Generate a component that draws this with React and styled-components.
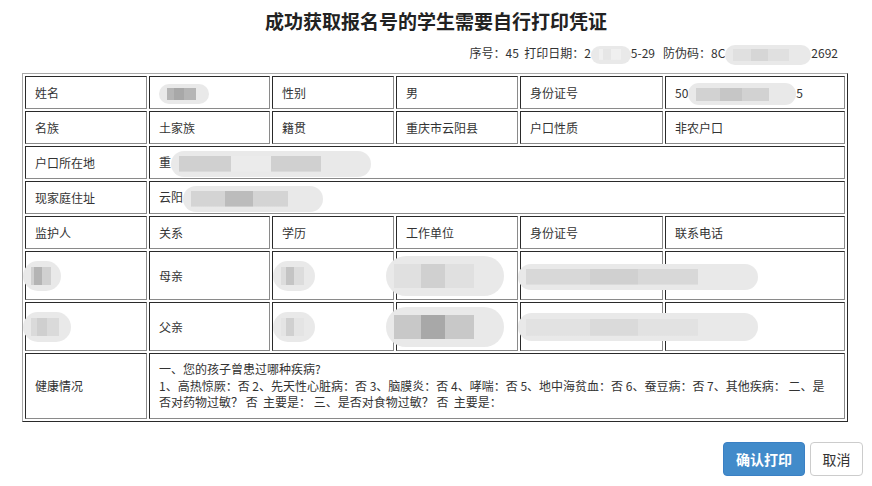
import React from 'react';
import styled, { createGlobalStyle } from 'styled-components';

const GlobalStyle = createGlobalStyle`
  body {
    margin: 0;
    background: #fff;
    font-family: "Noto Sans CJK SC", "Noto Sans", sans-serif;
    color: #333;
  }
`;

const Page = styled.div`
  width: 872px;
  height: 486px;
  display: flex;
  flex-direction: column;
`;

const Title = styled.h1`
  margin: 0;
  padding-top: 8px;
  height: 26px;
  text-align: center;
  font-size: 19px;
  line-height: 26px;
  font-weight: bold;
  color: #222;
`;

const Meta = styled.div`
  margin-top: 11px;
  padding-right: 34px;
  text-align: right;
  font-size: 12px;
  line-height: 16px;
  color: #333;
  white-space: nowrap;
`;

const TableWrap = styled.div`
  padding: 12px 28px 0 22px;
`;

const Table = styled.table`
  width: 822px;
  border-collapse: separate;
  border-spacing: 2px;
  border: 1px solid;
  border-color: #a8a8a8 #2a2a2a #2a2a2a #a8a8a8;
  background: #fff;
  table-layout: fixed;
  font-size: 12px;
  color: #333;
`;

const Cell = styled.td`
  box-sizing: border-box;
  height: ${p => p.$h || 33}px;
  padding: ${p => (p.$pad ? '7px 9px' : '0 9px')};
  border: 1px solid;
  border-color: #2a2a2a #8a8a8a #8a8a8a #2a2a2a;
  line-height: ${p => (p.$pad ? '16.5px' : '16px')};
  vertical-align: middle;
  white-space: ${p => (p.$wrap ? 'normal' : 'nowrap')};
  overflow: visible;
`;

const Blur = styled.span`
  display: inline-block;
  vertical-align: middle;
  width: ${p => p.$w}px;
  height: ${p => p.$h || 20}px;
  margin: -6px 0 -6px ${p => p.$ml || 0}px;
  border-radius: ${p => (p.$h || 20) / 2}px;
  background:
    linear-gradient(90deg,
      transparent 0 8px,
      ${p => p.$c1 || '#cfcfcf'} 8px ${p => p.$w * 0.3}px,
      ${p => p.$c2 || '#bdbdbd'} ${p => p.$w * 0.3}px ${p => p.$w * 0.5}px,
      ${p => p.$c1 || '#cfcfcf'} ${p => p.$w * 0.5}px ${p => p.$w * 0.75}px,
      transparent ${p => p.$w * 0.75}px) center / 100% 60% no-repeat,
    #e9e9e9;
`;

const Footer = styled.div`
  display: flex;
  justify-content: flex-end;
  gap: 5px;
  padding: 20px 9px 0 0;
`;

const Button = styled.button`
  height: 34px;
  padding: 0;
  border-radius: 4px;
  font-family: "Noto Sans CJK SC", sans-serif;
  font-size: 14px;
  white-space: nowrap;
  cursor: pointer;
  border: 1px solid ${p => (p.$primary ? '#3a80c4' : '#cccccc')};
  background: ${p => (p.$primary ? '#428bca' : '#fff')};
  color: ${p => (p.$primary ? '#fff' : '#333')};
  font-weight: ${p => (p.$primary ? 'bold' : 'normal')};
  width: ${p => p.$w}px;
`;

export default function App() {
  return (
    <Page>
      <GlobalStyle />
      <Title>成功获取报名号的学生需要自行打印凭证</Title>
      <Meta>
        序号：45&nbsp;&nbsp;打印日期：2<Blur $w={40} $h={18} $c1="#f0f0f0" $c2="#e6e6e6" />5-29&nbsp;&nbsp;&nbsp;防伪码：8C<Blur $w={86} $h={20} $c1="#e0e0e0" $c2="#d6d6d6" />2692
      </Meta>
      <TableWrap>
        <Table>
          <colgroup>
            <col style={{ width: 122 }} />
            <col style={{ width: 121 }} />
            <col style={{ width: 122 }} />
            <col style={{ width: 122 }} />
            <col style={{ width: 143 }} />
            <col style={{ width: 180 }} />
          </colgroup>
          <tbody>
            <tr>
              <Cell>姓名</Cell>
              <Cell><Blur $w={50} $h={20} $c1="#b5b5b5" $c2="#a8a8a8" /></Cell>
              <Cell>性别</Cell>
              <Cell>男</Cell>
              <Cell>身份证号</Cell>
              <Cell>50<Blur $w={108} $h={22} $c1="#d2d2d2" $c2="#c6c6c6" />5</Cell>
            </tr>
            <tr>
              <Cell>名族</Cell>
              <Cell>土家族</Cell>
              <Cell>籍贯</Cell>
              <Cell>重庆市云阳县</Cell>
              <Cell>户口性质</Cell>
              <Cell>非农户口</Cell>
            </tr>
            <tr>
              <Cell>户口所在地</Cell>
              <Cell colSpan={5}>重<Blur $w={200} $h={26} $c1="#d0d0d0" $c2="#ebebeb" /></Cell>
            </tr>
            <tr>
              <Cell>现家庭住址</Cell>
              <Cell colSpan={5}>云阳<Blur $w={140} $h={26} $c1="#d4d4d4" $c2="#bcbcbc" /></Cell>
            </tr>
            <tr>
              <Cell>监护人</Cell>
              <Cell>关系</Cell>
              <Cell>学历</Cell>
              <Cell>工作单位</Cell>
              <Cell>身份证号</Cell>
              <Cell>联系电话</Cell>
            </tr>
            <tr>
              <Cell $h={49}><Blur $w={38} $h={30} $ml={-12} $c1="#d0d0d0" $c2="#b4b4b4" /></Cell>
              <Cell $h={49}>母亲</Cell>
              <Cell $h={49}><Blur $w={42} $h={30} $ml={-9} $c1="#dcdcdc" $c2="#c4c4c4" /></Cell>
              <Cell $h={49}><Blur $w={118} $h={40} $ml={-20} $c1="#e0e0e0" $c2="#d0d0d0" /></Cell>
              <Cell $h={49}><Blur $w={240} $h={26} $ml={-12} $c1="#d8d8d8" $c2="#d0d0d0" /></Cell>
              <Cell $h={49} />
            </tr>
            <tr>
              <Cell $h={49}><Blur $w={48} $h={30} $ml={-12} $c1="#dadada" $c2="#cfcfcf" /></Cell>
              <Cell $h={49}>父亲</Cell>
              <Cell $h={49}><Blur $w={42} $h={30} $ml={-9} $c1="#e4e4e4" $c2="#d0d0d0" /></Cell>
              <Cell $h={49}><Blur $w={118} $h={40} $ml={-20} $c1="#c8c8c8" $c2="#a8a8a8" /></Cell>
              <Cell $h={49}><Blur $w={240} $h={28} $ml={-12} $c1="#e2e2e2" $c2="#dadada" /></Cell>
              <Cell $h={49} />
            </tr>
            <tr>
              <Cell $h={65}>健康情况</Cell>
              <Cell colSpan={5} $h={65} $pad $wrap>
                一、您的孩子曾患过哪种疾病?<br />
                1、高热惊厥：否 2、先天性心脏病：否 3、脑膜炎：否 4、哮喘：否 5、地中海贫血：否 6、蚕豆病：否 7、其他疾病： 二、是否对药物过敏？ 否&nbsp;&nbsp;主要是： 三、是否对食物过敏？ 否&nbsp;&nbsp;主要是：
              </Cell>
            </tr>
          </tbody>
        </Table>
      </TableWrap>
      <Footer>
        <Button $primary $w={82}>确认打印</Button>
        <Button $w={53}>取消</Button>
      </Footer>
    </Page>
  );
}
